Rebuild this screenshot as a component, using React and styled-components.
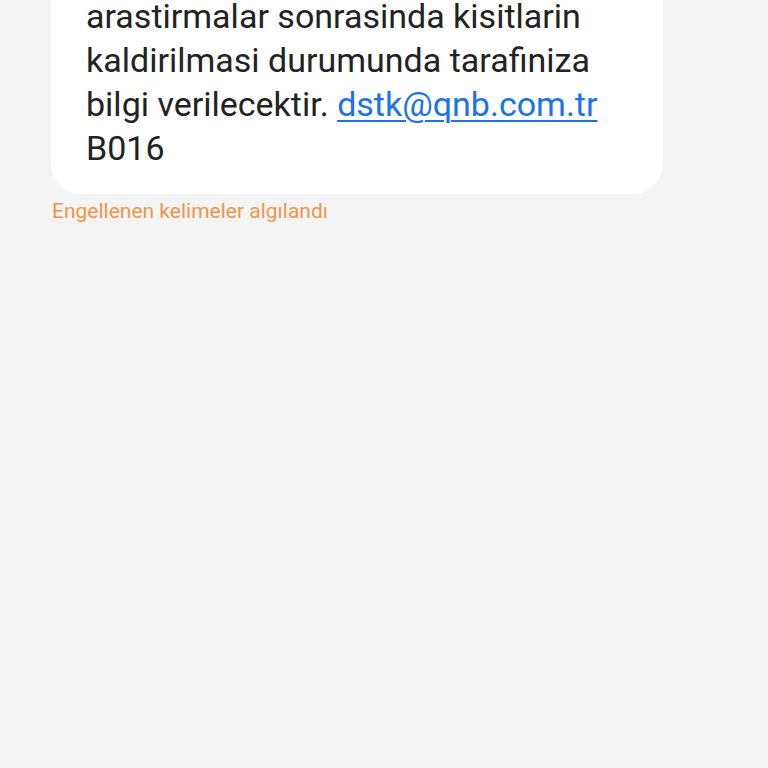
import styled, { createGlobalStyle } from 'styled-components';

const GlobalStyle = createGlobalStyle`
  html, body {
    margin: 0;
    padding: 0;
    background: #f4f4f4;
    height: 100%;
    overflow: hidden;
  }
  #root {
    min-height: 100vh;
  }
`;

const Screen = styled.div`
  min-height: 100vh;
  background: #f4f4f4;
  padding: 0 105px 0 51px;
  font-family: Roboto, 'Noto Sans', sans-serif;
`;

const Bubble = styled.div`
  background: #ffffff;
  border-radius: 0 0 30px 30px;
  margin-top: -6px;
  padding: 0 20px 24px 35px;
`;

const Message = styled.p`
  margin: 0;
  font-size: 34px;
  line-height: 44px;
  color: #222222;
`;

const Link = styled.a`
  color: #1a73e8;
  text-decoration: underline;
  text-decoration-thickness: 2px;
  text-underline-offset: 4px;
`;

const Warning = styled.div`
  margin-top: 4px;
  padding-left: 1px;
  font-size: 21px;
  line-height: 26px;
  color: #f0964b;
`;

const App = () => {
  return (
    <>
      <GlobalStyle />
      <Screen>
        <Bubble>
          <Message>
            arastirmalar sonrasinda kisitlarin
            <br />
            kaldirilmasi durumunda tarafiniza
            <br />
            bilgi verilecektir. <Link href='#'>dstk@qnb.com.tr</Link>
            <br />
            B016
          </Message>
        </Bubble>
        <Warning>Engellenen kelimeler algılandı</Warning>
      </Screen>
    </>
  );
};

export default App;
